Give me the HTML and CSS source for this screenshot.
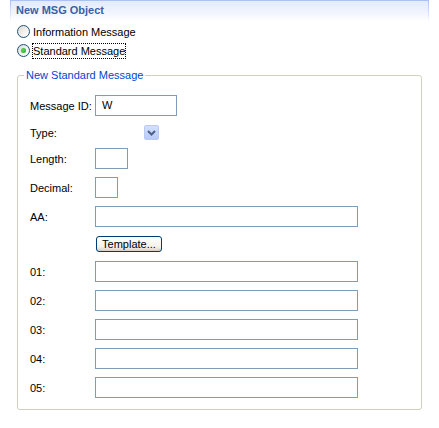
FILE: index.html
```html
<!DOCTYPE html>
<html>
<head>
<meta charset="utf-8">
<link rel="stylesheet" href="styles.css">
</head>
<body>
<div class="panel">
  <div class="header"><span class="title">New MSG Object</span></div>
  <div class="options">
    <div class="radio"><span class="dot"></span><span class="rtext">Information Message</span></div>
    <div class="radio checked"><span class="dot"></span><span class="rtext focus">Standard Message</span></div>
  </div>
  <fieldset class="group">
    <legend>New Standard Message</legend>
    <div class="form">
      <span class="lbl">Message ID:</span>
      <div class="field extra"><div class="input w-id">W</div></div>

      <span class="lbl">Type:</span>
      <div class="field combo">
        <div class="dropbtn">
          <svg width="13" height="13" viewBox="0 0 13 13"><path d="M3 5 L6.5 8.5 L10 5" fill="none" stroke="#4d6185" stroke-width="2"/></svg>
        </div>
      </div>

      <span class="lbl">Length:</span>
      <div class="field"><div class="input w-len"></div></div>

      <span class="lbl">Decimal:</span>
      <div class="field"><div class="input w-dec"></div></div>

      <span class="lbl">AA:</span>
      <div class="field extra"><div class="input w-long"></div></div>

      <span class="lbl"></span>
      <div class="field extra"><div class="button">Template...</div></div>

      <span class="lbl">01:</span>
      <div class="field"><div class="input w-long"></div></div>

      <span class="lbl">02:</span>
      <div class="field"><div class="input w-long"></div></div>

      <span class="lbl">03:</span>
      <div class="field"><div class="input w-long"></div></div>

      <span class="lbl">04:</span>
      <div class="field"><div class="input w-long"></div></div>

      <span class="lbl">05:</span>
      <div class="field"><div class="input w-long"></div></div>
    </div>
  </fieldset>
</div>
</body>
</html>
```

FILE: styles.css
```css
html, body {
  margin: 0;
  padding: 0;
  background: #fff;
}
body {
  font-family: "Liberation Sans", Arial, sans-serif;
  font-size: 11px;
  color: #000;
}
.panel {
  width: 439px;
}
.header {
  margin-left: 10px;
  width: 417px;
  height: 20px;
  border-style: solid;
  border-width: 1px 1px 0 1px;
  border-image: linear-gradient(to bottom, #a9c1f0, #d6e2fa 60%, #ffffff) 1;
  background: linear-gradient(to bottom, #e2eafb, #f4f7fe 70%, #ffffff);
}
.title {
  display: block;
  padding-left: 5px;
  line-height: 19px;
  font-weight: bold;
  color: #3b5ea6;
}
.options {
  padding-top: 1px;
  padding-left: 17px;
}
.radio {
  display: flex;
  align-items: center;
  height: 19px;
  gap: 2px;
}
.dot {
  width: 13px;
  height: 13px;
  box-sizing: border-box;
  border-radius: 50%;
  border: 1px solid #1c5180;
  background: linear-gradient(135deg, #dcd9cf, #f4f3ee 60%, #ffffff);
  display: flex;
  align-items: center;
  justify-content: center;
}
.checked .dot::after {
  content: "";
  width: 5px;
  height: 5px;
  border-radius: 50%;
  background: radial-gradient(circle at 40% 40%, #5fd45f, #21a121);
}
.rtext {
  border: 1px solid transparent;
  line-height: 14px;
}
.rtext.focus {
  border: 1px dotted #000;
}
.group {
  margin: 9px 0 0 17px;
  width: 403px;
  box-sizing: border-box;
  width: 405px;
  border: 1px solid #d0d0bf;
  border-radius: 3px;
  padding: 13px 12px 11px 12px;
}
.group legend {
  color: #0046d5;
  padding: 0 2px;
  margin-left: -6px;
  line-height: 13px;
}
.form {
  display: grid;
  grid-template-columns: 65px 1fr;
  row-gap: 8px;
}
.lbl {
  align-self: center;
  white-space: nowrap;
}
.field {
  display: flex;
  align-items: center;
}
.field.extra {
  margin-bottom: 1px;
}
.input {
  box-sizing: border-box;
  height: 21px;
  border: 1px solid #7f9db9;
  background: #fff;
  padding-left: 6px;
  line-height: 19px;
}
.w-id { width: 82px; }
.w-len { width: 33px; }
.w-dec { width: 23px; }
.w-long { width: 263px; }
.combo {
  height: 15px;
}
.dropbtn {
  margin-left: 49px;
  width: 15px;
  height: 15px;
  box-sizing: border-box;
  border: 1px solid #b9cbf3;
  border-radius: 2px;
  background: linear-gradient(to bottom, #d3dffc, #b8cbf7);
  display: flex;
  align-items: center;
  justify-content: center;
}
.dropbtn svg {
  display: block;
}
.button {
  margin-left: 1px;
  width: 66px;
  height: 16px;
  box-sizing: border-box;
  border: 1px solid #003c74;
  border-radius: 3px;
  background: linear-gradient(to bottom, #ffffff, #f3f2ec 70%, #d6d0c5);
  text-align: center;
  line-height: 14px;
}
```
